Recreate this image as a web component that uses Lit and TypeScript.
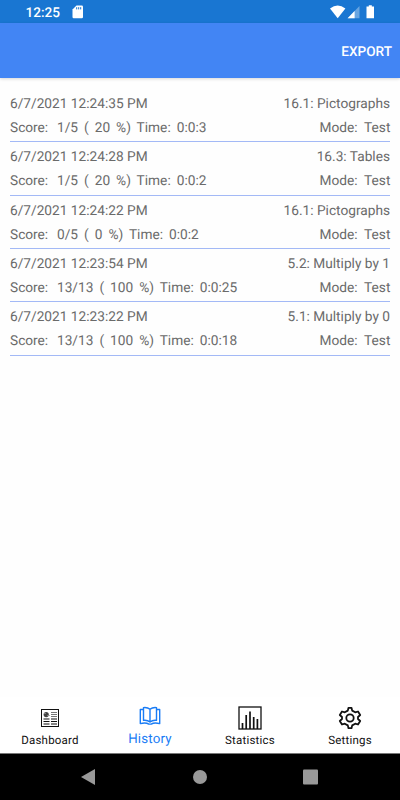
import { LitElement, html, css, svg } from "lit";
import { customElement } from "lit/decorators.js";

interface Attempt {
  date: string;
  topic: string;
  score: string;
  percent: number;
  time: string;
}

const ATTEMPTS: Attempt[] = [
  { date: "6/7/2021 12:24:35 PM", topic: "16.1: Pictographs", score: "1/5", percent: 20, time: "0:0:3" },
  { date: "6/7/2021 12:24:28 PM", topic: "16.3: Tables", score: "1/5", percent: 20, time: "0:0:2" },
  { date: "6/7/2021 12:24:22 PM", topic: "16.1: Pictographs", score: "0/5", percent: 0, time: "0:0:2" },
  { date: "6/7/2021 12:23:54 PM", topic: "5.2: Multiply by 1", score: "13/13", percent: 100, time: "0:0:25" },
  { date: "6/7/2021 12:23:22 PM", topic: "5.1: Multiply by 0", score: "13/13", percent: 100, time: "0:0:18" },
];

const bars = [
  [4.5, 17], [8.2, 9], [12, 5.5], [15.7, 11], [19.4, 13],
];

@customElement("app-root")
export class AppRoot extends LitElement {
  static styles = css`
    :host {
      display: flex;
      flex-direction: column;
      width: 400px;
      height: 800px;
      overflow: hidden;
      background: #fefefe;
      font-family: Roboto, "Liberation Sans", sans-serif;
      text-rendering: geometricPrecision;
    }
    svg { display: block; }
    .status {
      height: 23px;
      flex: none;
      display: flex;
      align-items: center;
      box-sizing: border-box;
      padding: 1px 25px 0 25.5px;
      background: #1976d2;
      color: #fff;
    }
    .clock { font-size: 13.6px; font-weight: 500; line-height: 22px; width: 46.5px; padding-top: 1px; }
    .signals { margin-left: auto; }
    .header {
      height: 54.5px;
      flex: none;
      display: flex;
      align-items: center;
      justify-content: flex-end;
      box-sizing: border-box;
      padding: 3px 8px 0 0;
      background: #4285f4;
      color: #fff;
      font-size: 13.6px;
      font-weight: 500;
      box-shadow: 0 1px 3px rgba(0, 0, 0, 0.16);
    }
    .list { flex: 1; padding: 11.4px 10px 0 10px; color: #6a6a6a; font-size: 13.7px; }
    .row { height: 53.33px; box-sizing: border-box; border-bottom: 1px solid #a3b9f6; padding-top: 3px; }
    .line { display: flex; justify-content: space-between; height: 24px; line-height: 24px; white-space: pre; }
    .wide { word-spacing: 2.6px; }
    .mode { word-spacing: 3.3px; margin-right: -0.4px; }
    .score { margin-right: 8.8px; }
    .tabs { height: 56px; flex: none; display: flex; background: #fff; border-bottom: 1px solid #777; }
    .tab { flex: 1; display: flex; flex-direction: column; align-items: center; color: #111; font-size: 11.5px; letter-spacing: 0.2px; }
    .icon { height: 35px; padding-top: 5px; box-sizing: border-box; display: flex; align-items: center; justify-content: center; margin-top: 1.5px; margin-bottom: -0.5px; }
    .label { line-height: 14px; }
    .active { color: #1a7cf5; font-size: 13.3px; }
    .active .icon { padding-top: 1px; margin-bottom: 0.2px; }
    .nav { height: 46.5px; flex: none; background: #000; }
  `;

  private dashboardIcon() {
    return svg`<svg width="20" height="20" viewBox="0 0 20 20" fill="none" stroke="#111">
      <rect x="1.5" y="1.5" width="17" height="17"/>
      <circle cx="6.2" cy="6.6" r="2.6" fill="#444" stroke="none"/>
      <path d="M4 5.5h2M7 7.5h3" stroke="#999" stroke-width=".7"/>
      <path d="M11 4.5h6M11 6.5h6M11 8.5h6" stroke="#777"/>
      <path d="M3.5 11h6M3.5 13.5h6M3.5 16h6M11 11h6M11 13.5h6M11 16h6" stroke-width="1.2"/>
    </svg>`;
  }

  private historyIcon() {
    return svg`<svg width="22" height="20" viewBox="0 0 22 20" fill="none" stroke="#1a7cf5" stroke-width="1.4" stroke-linejoin="round">
      <path d="M11 3.3C9.3 1.8 7 1.3 4.5 1.6V14.4C7 14.1 9.3 14.6 11 16.1C12.7 14.6 15 14.1 17.5 14.4V1.6C15 1.3 12.7 1.8 11 3.3ZM11 3.3V16"/>
      <path d="M4.5 3.5H1.3V17.6C4.5 16.7 7.8 16.8 9.8 18.1H12.2C14.2 16.8 17.5 16.7 20.7 17.6V3.5H17.5"/>
    </svg>`;
  }

  private statisticsIcon() {
    return svg`<svg width="24" height="24" viewBox="0 0 24 24" fill="none" stroke="#111">
      <rect x="1" y="1" width="22" height="22" stroke-width="1.3"/>
      ${bars.map(([x, y]) => svg`<path d="M${x} ${y}V23" stroke-width="1.7"/>`)}
    </svg>`;
  }

  private settingsIcon() {
    return svg`<svg width="24" height="24" viewBox="0 0 24 24" fill="none" stroke="#111" stroke-width="1.8" stroke-linejoin="round">
      <path d="M10.5 1.8H13.5L14.2 4.6L17.2 6.3L20 5.5L22.2 9L20 11V13L22.2 15L20 18.5L17.2 17.7L14.2 19.4L13.5 22.2H10.5L9.8 19.4L6.8 17.7L4 18.5L1.8 15L4 13V11L1.8 9L4 5.5L6.8 6.3L9.8 4.6Z"/>
      <circle cx="12" cy="12" r="3.7"/>
    </svg>`;
  }

  render() {
    return html`
      <div class="status">
        <span class="clock">12:25</span>
        <svg width="12" height="14" viewBox="0 0 12 14">
          <path d="M4.5.5H9.8Q11 .5 11 1.7V12Q11 13.2 9.8 13.2H1.7Q.5 13.2 .5 12V4.5Z" fill="#fff"/>
          <path d="M4.7 2.2V4.4M6.7 2.2V4.4M8.7 2.2V4.4" stroke="#1976d2"/>
        </svg>
        <svg class="signals" width="46" height="14" viewBox="0 0 46 14">
          <path d="M1 3.5Q8.7 -2.3 16.4 3.5L8.7 13.3Z" fill="#fff"/>
          <path d="M30.5 .9V13.2H18.6Z" fill="#fff" fill-opacity=".35"/>
          <path d="M25.6 6V13.2H18.6Z" fill="#fff"/>
          <path d="M39.8 .3H42.8V1.5H45V13.2H37.5V1.5H39.8Z" fill="#fff"/>
        </svg>
      </div>
      <div class="header">EXPORT</div>
      <div class="list">
        ${ATTEMPTS.map(
          (a) => html`<div class="row">
            <div class="line"><span>${a.date}</span><span>${a.topic}</span></div>
            <div class="line wide"><span><span class="score">Score:</span>${a.score} ( ${a.percent} %) Time: ${a.time}</span><span class="mode">Mode: Test</span></div>
          </div>`
        )}
      </div>
      <div class="tabs">
        <div class="tab"><div class="icon">${this.dashboardIcon()}</div><div class="label">Dashboard</div></div>
        <div class="tab active"><div class="icon">${this.historyIcon()}</div><div class="label">History</div></div>
        <div class="tab"><div class="icon">${this.statisticsIcon()}</div><div class="label">Statistics</div></div>
        <div class="tab"><div class="icon">${this.settingsIcon()}</div><div class="label">Settings</div></div>
      </div>
      <svg class="nav" width="400" height="46.5" viewBox="0 0 400 46.5" fill="#999">
        <path d="M81 23L95 15V31Z"/>
        <circle cx="200" cy="23" r="7"/>
        <rect x="303" y="15.5" width="15" height="15" rx="1"/>
      </svg>
    `;
  }
}
